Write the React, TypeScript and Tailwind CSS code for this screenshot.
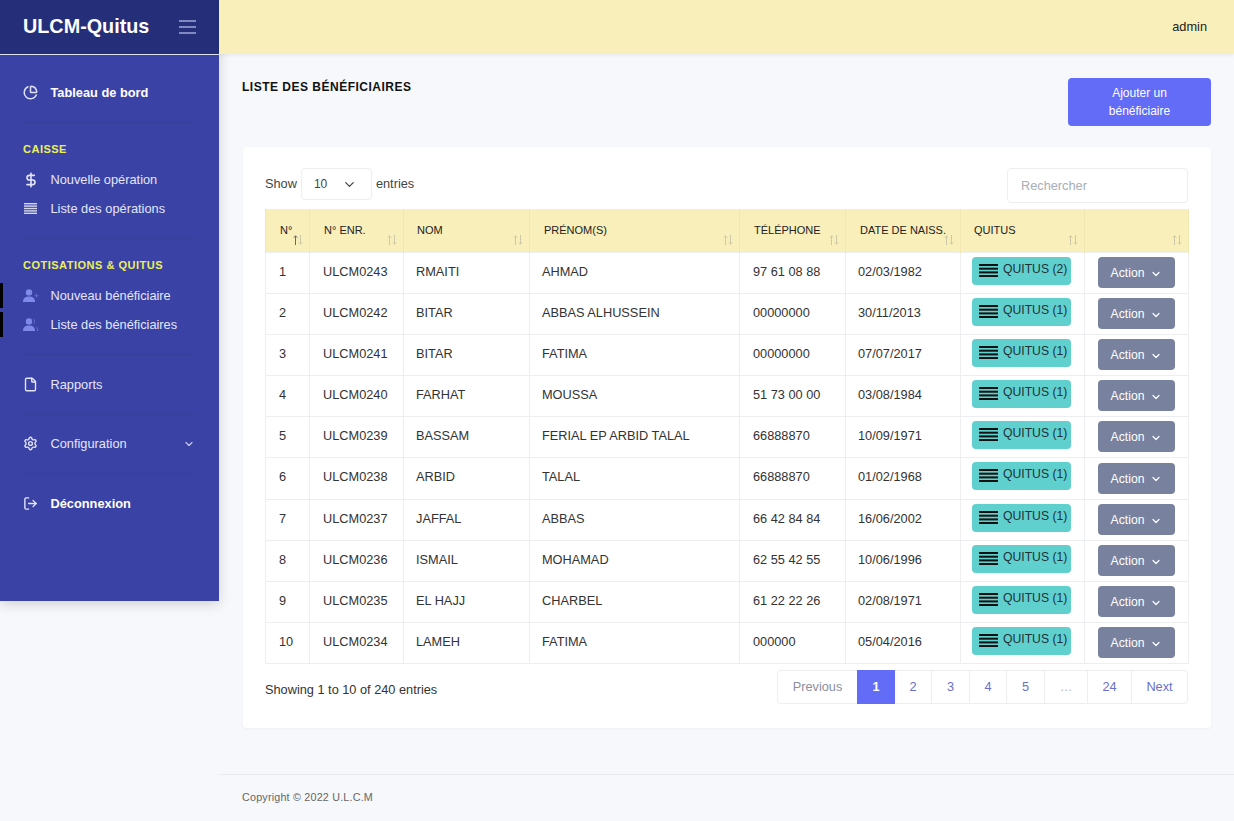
import React from "react";
import { ChevronDown, DollarSign, PieChart, File, Settings, LogOut } from "lucide-react";

const ROWS = [
  { n: 1, enr: "ULCM0243", nom: "RMAITI", prenom: "AHMAD", tel: "97 61 08 88", date: "02/03/1982", q: 2 },
  { n: 2, enr: "ULCM0242", nom: "BITAR", prenom: "ABBAS ALHUSSEIN", tel: "00000000", date: "30/11/2013", q: 1 },
  { n: 3, enr: "ULCM0241", nom: "BITAR", prenom: "FATIMA", tel: "00000000", date: "07/07/2017", q: 1 },
  { n: 4, enr: "ULCM0240", nom: "FARHAT", prenom: "MOUSSA", tel: "51 73 00 00", date: "03/08/1984", q: 1 },
  { n: 5, enr: "ULCM0239", nom: "BASSAM", prenom: "FERIAL EP ARBID TALAL", tel: "66888870", date: "10/09/1971", q: 1 },
  { n: 6, enr: "ULCM0238", nom: "ARBID", prenom: "TALAL", tel: "66888870", date: "01/02/1968", q: 1 },
  { n: 7, enr: "ULCM0237", nom: "JAFFAL", prenom: "ABBAS", tel: "66 42 84 84", date: "16/06/2002", q: 1 },
  { n: 8, enr: "ULCM0236", nom: "ISMAIL", prenom: "MOHAMAD", tel: "62 55 42 55", date: "10/06/1996", q: 1 },
  { n: 9, enr: "ULCM0235", nom: "EL HAJJ", prenom: "CHARBEL", tel: "61 22 22 26", date: "02/08/1971", q: 1 },
  { n: 10, enr: "ULCM0234", nom: "LAMEH", prenom: "FATIMA", tel: "000000", date: "05/04/2016", q: 1 },
];

const COLS = [
  { label: "N°", w: "w-[44px]", pl: "pl-[14px]", active: true },
  { label: "N° ENR.", w: "w-[94px]", pl: "pl-[14px]" },
  { label: "NOM", w: "w-[126px]", pl: "pl-[13px]" },
  { label: "PRÉNOM(S)", w: "w-[210px]", pl: "pl-[14px]" },
  { label: "TÉLÉPHONE", w: "w-[106px]", pl: "pl-[14px]" },
  { label: "DATE DE NAISS.", w: "w-[115px]", pl: "pl-[14px]" },
  { label: "QUITUS", w: "w-[124px]", pl: "pl-[13px]" },
  { label: "", w: "w-[104px]", pl: "pl-[14px]" },
];

const SortArrows = ({ active }: { active?: boolean }) => (
  <svg width="10" height="10" viewBox="0 0 10 10" fill="none" strokeWidth="1" className="absolute right-[6px] bottom-[7px] text-[#cdc8a8]" stroke="currentColor">
    <path d="M2.5 10V.8M.8 2.6 2.5.8l1.7 1.8" className={active ? "text-[#666]" : ""} />
    <path d="M7.5 0v9.2M5.8 7.4l1.7 1.8 1.7-1.8" />
  </svg>
);

const BarsIcon = () => (
  <svg width="13" height="11" viewBox="0 0 13 11" className="ml-[1px] text-[#d6d9f2]" fill="currentColor">
    <rect y="0" width="13" height="1.4" />
    <rect y="2.4" width="13" height="1.4" />
    <rect y="4.8" width="13" height="1.4" />
    <rect y="7.2" width="13" height="1.4" />
    <rect y="9.6" width="13" height="1.4" />
  </svg>
);

const UserPlusIcon = () => (
  <svg width="16" height="14" viewBox="0 0 16 14" className="text-[#7f89e8]" fill="currentColor">
    <circle cx="6" cy="3.4" r="3.2" />
    <path d="M0 13 C0 9.2 2.4 7.6 6 7.6 C9.6 7.6 12 9.2 12 13 Z" />
    <path d="M13 4.6 h1 v1.6 h1.6 v1 h-1.6 v1.6 h-1 v-1.6 h-1.6 v-1 h1.6 Z" opacity="0.55" />
  </svg>
);

const UsersIcon = () => (
  <svg width="16" height="14" viewBox="0 0 16 14" className="text-[#7f89e8]" fill="currentColor">
    <circle cx="6" cy="3.4" r="3.2" />
    <path d="M0 13 C0 9.2 2.4 7.6 6 7.6 C9.6 7.6 12 9.2 12 13 Z" />
    <path d="M10 .6 A3 3 0 0 1 10 6.2 A4.4 4.4 0 0 0 10 .6 Z" opacity="0.7" />
    <path d="M12.6 8.2 C14.4 9 15.4 10.6 15.4 13 H14 C14 11 13.6 9.4 12.6 8.2 Z" opacity="0.55" />
  </svg>
);

const QuitusIcon = () => (
  <svg width="19" height="13" viewBox="0 0 19 13" className="text-[#111] shrink-0" fill="currentColor">
    <rect y="0" width="19" height="2" />
    <rect y="3.7" width="19" height="2" />
    <rect y="7.4" width="19" height="2" />
    <rect y="11" width="19" height="2" />
  </svg>
);

const NavItem = ({ icon, label, bold, right, children }: { icon: React.ReactNode; label: string; bold?: boolean; right?: React.ReactNode; children?: React.ReactNode }) => (
  <div className={`relative flex items-center h-[29px] pl-[23px] pr-[23px] text-[12.8px] ${bold ? "font-bold text-white" : "text-[#e4e6f7]"}`}>
    {children}
    <span className="w-[27.5px] flex items-center">{icon}</span>
    <span className="flex-1">{label}</span>
    {right}
  </div>
);

const Divider = () => <div className="mx-[23px] border-t border-[#34409a]" />;

const GroupTitle = ({ children }: { children: React.ReactNode }) => (
  <div className="pl-[23px] text-[11px] font-bold tracking-[0.5px] text-[#ecef5c] leading-[14px]">{children}</div>
);

const PAGES = [
  { p: "2", w: "w-[37px]" },
  { p: "3", w: "w-[38px]" },
  { p: "4", w: "w-[37px]" },
  { p: "5", w: "w-[38px]" },
];

export default function App() {
  return (
    <div className="relative flex min-h-[821px] bg-[#f6f8fc] font-['Liberation_Sans',Arial,sans-serif] text-[#333]">
      <aside className="w-[219px] h-[601px] shrink-0 bg-[#3a42a5] shadow-[0_3px_12px_rgba(0,0,0,0.16)] z-10">
        <div className="h-[55px] bg-[#252e78] border-b border-[#dfe1f0] flex items-center justify-between pl-[23px] pr-[23px]">
          <span className="text-[19.8px] font-bold text-white">ULCM-Quitus</span>
          <span className="flex flex-col gap-[4px] w-[17px]">
            <span className="h-[2px] bg-[#8088c4]" />
            <span className="h-[2px] bg-[#8088c4]" />
            <span className="h-[2px] bg-[#8088c4]" />
          </span>
        </div>
        <div className="pt-[23px]">
          <NavItem bold label="Tableau de bord" icon={<PieChart size={15} strokeWidth={2.4} className="text-[#dfe1f5]" />} />
          <div className="h-[15px]" />
          <Divider />
          <div className="h-[19px]" />
          <GroupTitle>CAISSE</GroupTitle>
          <div className="h-[9px]" />
          <NavItem label="Nouvelle opération" icon={<DollarSign size={16} strokeWidth={2.4} className="text-[#e4e6f7]" />} />
          <NavItem label="Liste des opérations" icon={<BarsIcon />} />
          <div className="h-[15px]" />
          <Divider />
          <div className="h-[19px]" />
          <GroupTitle>COTISATIONS &amp; QUITUS</GroupTitle>
          <div className="h-[9px]" />
          <NavItem label="Nouveau bénéficiaire" icon={<UserPlusIcon />}>
            <span className="absolute left-0 top-[2px] w-[3px] h-[25px] bg-black" />
          </NavItem>
          <NavItem label="Liste des bénéficiaires" icon={<UsersIcon />}>
            <span className="absolute left-0 top-[2px] w-[3px] h-[25px] bg-black" />
          </NavItem>
          <div className="h-[15px]" />
          <Divider />
          <div className="h-[15px]" />
          <NavItem label="Rapports" icon={<File size={15} strokeWidth={2.2} className="text-[#e4e6f7]" />} />
          <div className="h-[15px]" />
          <Divider />
          <div className="h-[14px]" />
          <NavItem label="Configuration" icon={<Settings size={15} strokeWidth={2.2} className="text-[#e4e6f7]" />} right={<ChevronDown size={12} strokeWidth={2.4} className="text-[#c5c9ea] mr-[1px]" />} />
          <div className="h-[15px]" />
          <Divider />
          <div className="h-[15px]" />
          <NavItem bold label="Déconnexion" icon={<LogOut size={15} strokeWidth={2.2} className="text-[#e4e6f7]" />} />
        </div>
      </aside>

      <div className="flex-1 flex flex-col min-w-0">
        <header className="relative z-20 h-[54px] bg-[#f9efbb] shadow-[0_1px_4px_rgba(0,0,0,0.08)] flex items-center justify-end pr-[27px] text-[12.75px] text-[#222]">admin</header>

        <main className="flex-1 pl-[23px] pr-[23px]">
          <div className="flex justify-between pt-[24px] h-[93px]">
            <h1 className="text-[12px] font-bold text-[#111] tracking-[0.5px] leading-[18px]">LISTE DES BÉNÉFICIAIRES</h1>
            <button className="w-[143px] h-[48px] rounded bg-[#636cf7] text-white text-[12px] leading-[18px] px-6">Ajouter un bénéficiaire</button>
          </div>

          <section className="ml-[1px] bg-white rounded shadow-[0_1px_3px_rgba(0,0,0,0.04)] h-[581px] pl-[22px] pr-[23px] pt-[21px] text-[12.75px]">
            <div className="flex items-start justify-between h-[41px]">
              <div className="flex items-center gap-[4px] text-[12.75px] text-[#444]">
                <span>Show</span>
                <div className="w-[71px] h-[32px] border border-[#eceef3] rounded flex items-center justify-between pl-[12px] pr-[14px] text-[12px] text-[#444]">
                  <span>10</span>
                  <ChevronDown size={15} />
                </div>
                <span>entries</span>
              </div>
              <div className="w-[181px] h-[35px] border border-[#eceef3] rounded flex items-center pl-[13px] text-[#a8adb8] text-[12.75px]">Rechercher</div>
            </div>

            <table className="w-[923px] table-fixed border-collapse">
              <thead>
                <tr className="h-[43px] bg-[#f9efbb]">
                  {COLS.map((c, i) => (
                    <th key={i} className={`${c.w} ${c.pl} relative border-x border-[#f1e7b3] text-left align-top pt-[15px] leading-[13px] text-[11px] font-normal text-[#222]`}>
                      {c.label}
                      <SortArrows active={c.active} />
                    </th>
                  ))}
                </tr>
              </thead>
              <tbody>
                {ROWS.map((r) => (
                  <tr key={r.n} className={r.n === 6 ? "h-[42px] text-[#333]" : "h-[41px] text-[#333]"}>
                    <td className="border border-[#eceef3] pl-[13px] pb-[2px]">{r.n}</td>
                    <td className="border border-[#eceef3] pl-[13px] pb-[2px]">{r.enr}</td>
                    <td className="border border-[#eceef3] pl-[12px] pb-[2px]">{r.nom}</td>
                    <td className="border border-[#eceef3] pl-[12px] pb-[2px]">{r.prenom}</td>
                    <td className="border border-[#eceef3] pl-[13px] pb-[2px]">{r.tel}</td>
                    <td className="border border-[#eceef3] pl-[12px] pb-[2px]">{r.date}</td>
                    <td className="border border-[#eceef3] pl-[11px] align-top pt-[4px]">
                      <div className="w-[99px] h-[28px] rounded bg-[#5fd0ce] flex items-center pl-[7px] gap-[5px] text-[#1f3136] text-[12.2px]">
                        <QuitusIcon />
                        <span className="-mt-[2px]">QUITUS ({r.q})</span>
                      </div>
                    </td>
                    <td className="border border-[#eceef3] pl-[13px]">
                      <div className="w-[77px] h-[31px] pt-[2px] rounded bg-[#78829e] flex items-center justify-center gap-[6px] text-white text-[12.2px]">
                        Action
                        <ChevronDown size={12} strokeWidth={2.4} />
                      </div>
                    </td>
                  </tr>
                ))}
              </tbody>
            </table>

            <div className="flex items-center justify-between mt-[6px] h-[35px]">
              <span className="text-[12.75px] text-[#333] mt-[5px]">Showing 1 to 10 of 240 entries</span>
              <nav className="flex h-[34px] self-start border border-[#eceef3] rounded text-[12.75px] text-[#6b70c9]">
                <span className="w-[79px] flex items-center justify-center text-[#8a8f9c]">Previous</span>
                <span className="w-[38px] -my-px flex items-center justify-center bg-[#636cf7] text-white font-bold">1</span>
                {PAGES.map(({ p, w }) => (
                  <span key={p} className={`${w} flex items-center justify-center border-r border-[#eceef3]`}>{p}</span>
                ))}
                <span className="w-[43px] flex items-center justify-center border-r border-[#eceef3] text-[#b5b8c2]">…</span>
                <span className="w-[44px] flex items-center justify-center border-r border-[#eceef3]">24</span>
                <span className="w-[55px] flex items-center justify-center">Next</span>
              </nav>
            </div>
          </section>
        </main>

        <footer className="h-[47px] pb-[2px] border-t border-[#e9ebf1] flex items-center pl-[23px] text-[10.75px] text-[#666] tracking-[0.2px]">Copyright © 2022 U.L.C.M</footer>
      </div>
    </div>
  );
}
